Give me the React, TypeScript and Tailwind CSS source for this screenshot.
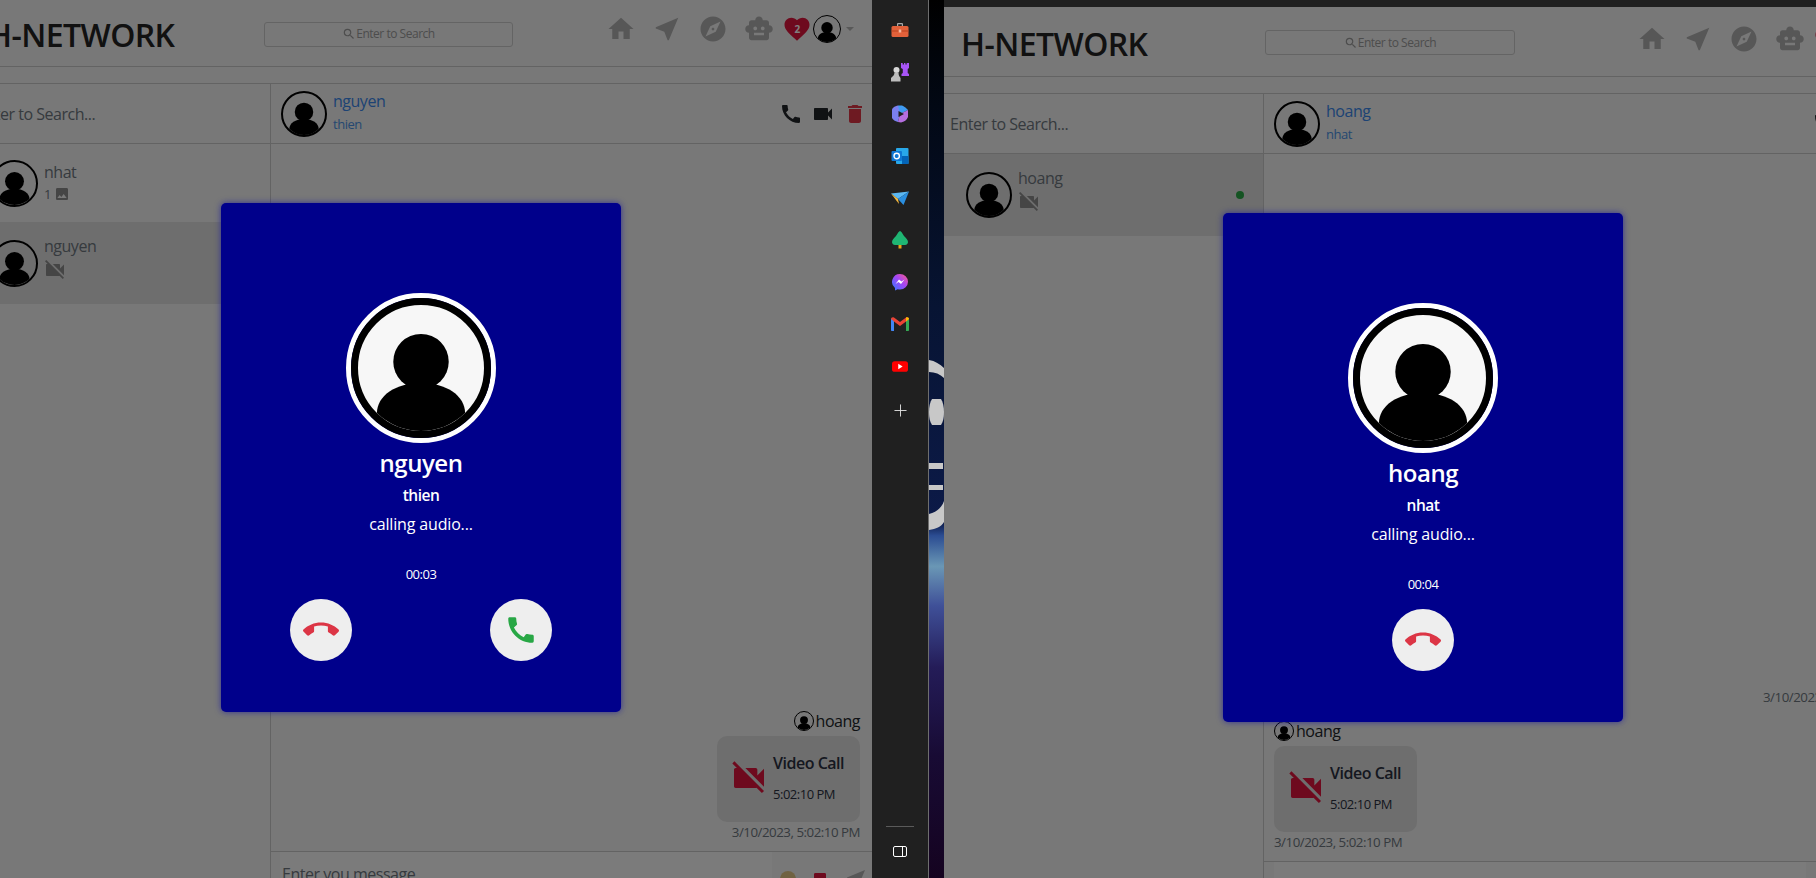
import React from 'react';
import { MdCall, MdCallEnd, MdDelete, MdExplore, MdFavorite, MdHome, MdImage, MdNearMe, MdSearch, MdSmartToy, MdVideocam, MdVideocamOff } from 'react-icons/md';

// person silhouette used by every avatar
const Person: React.FC = () => (
  <svg viewBox="0 0 100 100" className="block w-full h-full">
    <circle cx="50" cy="45" r="22" fill="#000" />
    <path d="M15 100 V86 C15 72 30 62 50 62 C70 62 85 72 85 86 V100 Z" fill="#000" />
  </svg>
);

const Avatar: React.FC<{ className: string }> = ({ className }) => (
  <div className={`shrink-0 rounded-full border-black overflow-hidden ${className}`}>
    <Person />
  </div>
);

const NavIcons: React.FC = () => (
  <div className="flex gap-4 text-[#aeaeae] text-[30px]">
    <MdHome />
    <MdNearMe />
    <MdExplore />
    <MdSmartToy />
  </div>
);

const Heart: React.FC = () => (
  <div className="relative text-[30px] text-[#dc143c] ml-2 shrink-0">
    <MdFavorite />
    <span className="absolute inset-0 flex items-center justify-center text-[10px] font-bold text-white">2</span>
  </div>
);

const Title: React.FC<{ className: string }> = ({ className }) => (
  <div className={`shrink-0 text-[32px] leading-none font-semibold tracking-[-0.018em] text-[#222] whitespace-nowrap ${className}`}>H-NETWORK</div>
);

const TopSearch: React.FC<{ className: string }> = ({ className }) => (
  <div className={`shrink-0 h-[25px] mt-[2px] rounded-[3px] border border-[#c8c8c8] flex items-center justify-center text-[12px] text-[#9a9a9a] ${className}`}>
    <MdSearch className="text-[14px]" />
    Enter to Search
  </div>
);

const CallActions: React.FC = () => (
  <div className="flex gap-[8px] text-[24px]">
    <MdCall className="text-[#212529]" />
    <MdVideocam className="text-[#212529]" />
    <MdDelete className="text-[#dc3545]" />
  </div>
);

const ChatHead: React.FC<{ name: string; sub: string }> = ({ name, sub }) => (
  <div className="ml-[6px] flex flex-col -mt-[4px]">
    <span className="text-[16px] leading-[24px] text-[#3a86e8]">{name}</span>
    <span className="text-[13px] leading-[22px] text-[#4a90e2]">{sub}</span>
  </div>
);

const VideoBubble: React.FC = () => (
  <div className="flex h-[86px] w-[143px] rounded-[10px] bg-[#dcdcdc] pl-[14px] pt-[16px] mt-[5px]">
    <MdVideocamOff className="text-[#dc143c] text-[40px] mt-[6px] -ml-[2px] shrink-0" />
    <div className="ml-[4px] flex flex-col">
      <span className="text-[16px] leading-[22px] font-semibold text-[#2b3040] whitespace-nowrap">Video Call</span>
      <span className="text-[13px] leading-[20px] mt-[10px] text-[#2b3040] whitespace-nowrap">5:02:10 PM</span>
    </div>
  </div>
);

const Author: React.FC = () => (
  <div className="flex items-center h-[20px] text-[16px] text-[#212529]">
    <Avatar className="w-[20px] h-[20px] border" />
    <span className="ml-[2px]">hoang</span>
  </div>
);

const MessageDate: React.FC<{ className?: string }> = ({ className = '' }) => (
  <div className={`text-[13.3px] leading-[18px] text-[#6c757d] whitespace-nowrap mt-[1px] ${className}`}>3/10/2023, 5:02:10 PM</div>
);

const RoundButton: React.FC<{ children: React.ReactNode }> = ({ children }) => (
  <div className="w-[62px] h-[62px] rounded-full bg-[#eeeeee] flex items-center justify-center">{children}</div>
);

const CallModal: React.FC<{ name: string; sub: string; time: string; className: string; incoming?: boolean }> = ({ name, sub, time, className, incoming }) => (
  <div className={`absolute w-[400px] h-[509px] rounded-[5px] bg-[#00008b] shadow-[0_0_6px_rgba(20,20,160,0.7)] flex flex-col items-center pt-[90px] text-white ${className}`}>
    <div className="w-[150px] h-[150px] rounded-full border-[5px] border-white">
      <div className="w-full h-full rounded-full border-[7px] border-black bg-[#f7f7f7] overflow-hidden">
        <Person />
      </div>
    </div>
    <div className="mt-[4px] text-[24px] leading-[32px] font-semibold">{name}</div>
    <div className="mt-[4px] text-[15.5px] leading-[24px] font-semibold">{sub}</div>
    <div className="mt-[5px] text-[16px] tracking-[-0.01em] leading-[24px]">calling audio...</div>
    <div className="mt-[28px] text-[13px] leading-[20px]">{time}</div>
    <div className={`mt-[15px] flex w-[262px] ${incoming ? 'justify-between' : 'justify-center'}`}>
      <RoundButton>
        <MdCallEnd className="text-[36px] text-[#dc3545]" />
      </RoundButton>
      {incoming && (
        <RoundButton>
          <MdCall className="text-[34px] text-[#28a745]" />
        </RoundButton>
      )}
    </div>
  </div>
);

const LeftWindow: React.FC = () => (
  <div className="relative w-[872px] shrink-0 h-full overflow-hidden bg-[#f0f0f0] flex flex-col">
    <header className="h-[67px] shrink-0 border-b border-[#c6c6c6] flex items-center">
      <Title className="-ml-[12px] w-[276px] mt-[4px]" />
      <TopSearch className="w-[249px]" />
      <div className="ml-[93px] flex items-center mb-[8px]">
        <NavIcons />
        <Heart />
        <Avatar className="w-[28px] h-[28px] border-[1.5px] ml-[1px]" />
        <span className="ml-[5px] w-0 h-0 border-x-[4px] border-x-transparent border-t-[4px] border-t-[#b0b0b0]" />
      </div>
    </header>
    <div className="h-[16px] shrink-0" />
    <div className="flex-1 min-h-0 flex border-t border-[#c6c6c6]">
      <aside className="w-[271px] shrink-0 border-r border-[#c6c6c6] flex flex-col">
        <div className="h-[60px] shrink-0 border-b border-[#c6c6c6] flex items-center text-[16px] text-[#6c757d] -ml-[23px]">Enter to Search...</div>
        <div className="h-[78px] flex items-center">
          <Avatar className="w-[47px] h-[47px] border-2 -ml-[9px]" />
          <div className="ml-[6px] -mt-[2px] flex flex-col text-[#6c757d]">
            <span className="text-[16px] leading-[24px]">nhat</span>
            <span className="flex items-center text-[13px] leading-[20px]">1 <MdImage className="ml-[3px] text-[16px] text-[#8a8a8a]" /></span>
          </div>
        </div>
        <div className="h-[82px] bg-[#dcdcdc] flex items-center">
          <Avatar className="w-[47px] h-[47px] border-2 -ml-[9px]" />
          <div className="ml-[6px] -mt-[10px] flex flex-col text-[#6c757d]">
            <span className="text-[16px] leading-[24px]">nguyen</span>
            <MdVideocamOff className="text-[24px] text-[#8a8a8a] -ml-[1px]" />
          </div>
        </div>
      </aside>
      <main className="flex-1 min-w-0 flex flex-col">
        <div className="h-[60px] shrink-0 border-b border-[#c6c6c6] flex items-center pl-[10px] pr-[5px]">
          <Avatar className="w-[46px] h-[46px] border-2" />
          <ChatHead name="nguyen" sub="thien" />
          <div className="ml-auto"><CallActions /></div>
        </div>
        <div className="flex-1 min-h-0 flex flex-col items-end justify-end pr-[12px] pb-[10px]">
          <Author />
          <VideoBubble />
          <MessageDate />
        </div>
        <div className="h-[27px] shrink-0 border-t border-[#c6c6c6] flex pl-[9px] overflow-hidden">
          <div className="w-[492px] bg-[#f6f6f6] pt-[10px] pl-[2px] text-[16px] text-[#6c757d]">Enter you message</div>
          <div className="flex items-start pl-[8px] pt-[19px] gap-[16px]">
            <span className="w-[16px] h-[16px] rounded-full bg-[#e0c585]" />
            <MdImage className="text-[16px] text-[#dc143c]" />
            <MdNearMe className="text-[24px] -mt-[4px] text-[#aeaeae]" />
          </div>
        </div>
      </main>
    </div>
    <div className="absolute inset-0 bg-black/50" />
    <CallModal name="nguyen" sub="thien" time="00:03" incoming className="left-[221px] top-[203px]" />
  </div>
);

const RightWindow: React.FC = () => (
  <div className="relative flex-1 min-w-0 h-full overflow-hidden bg-[#f0f0f0] flex flex-col">
    <header className="h-[70px] shrink-0 border-b border-[#c6c6c6] flex items-center">
      <Title className="ml-[17px] w-[304px] mt-[4px]" />
      <TopSearch className="w-[250px]" />
      <div className="ml-[122px] flex items-center mb-[6px]">
        <NavIcons />
        <Heart />
      </div>
    </header>
    <div className="h-[16px] shrink-0" />
    <div className="flex-1 min-h-0 flex border-t border-[#c6c6c6]">
      <aside className="w-[320px] shrink-0 border-r border-[#c6c6c6] flex flex-col">
        <div className="h-[60px] shrink-0 border-b border-[#c6c6c6] flex items-center pl-[6px] text-[16px] text-[#6c757d]">Enter to Search...</div>
        <div className="h-[82px] bg-[#dcdcdc] flex items-center pl-[22px] pr-[19px]">
          <Avatar className="w-[46px] h-[46px] border-2" />
          <div className="ml-[6px] -mt-[10px] flex flex-col text-[#6c757d]">
            <span className="text-[16px] leading-[24px]">hoang</span>
            <MdVideocamOff className="text-[24px] text-[#8a8a8a] -ml-[1px]" />
          </div>
          <span className="ml-auto w-[8px] h-[8px] rounded-full bg-[#28a745]" />
        </div>
      </aside>
      <main className="flex-1 min-w-0 flex flex-col">
        <div className="h-[60px] shrink-0 border-b border-[#c6c6c6] flex items-center pl-[10px]">
          <Avatar className="w-[46px] h-[46px] border-2" />
          <ChatHead name="hoang" sub="nhat" />
          <div className="ml-auto -mr-[84px]"><CallActions /></div>
        </div>
        <div className="flex-1 min-h-0 flex flex-col items-start justify-end pl-[10px] pb-[10px]">
          <MessageDate className="ml-[489px] mb-[15px]" />
          <Author />
          <VideoBubble />
          <MessageDate />
        </div>
        <div className="h-[17px] shrink-0 border-t border-[#c6c6c6] pl-[10px] pr-[10px]">
          <div className="h-full bg-[#f6f6f6]" />
        </div>
      </main>
    </div>
    <div className="absolute inset-0 bg-black/50" />
    <CallModal name="hoang" sub="nhat" time="00:04" className="left-[279px] top-[206px]" />
  </div>
);

// Sidebar app logos, drawn by hand
const ToolboxLogo = () => (
  <svg viewBox="0 0 18 18" className="w-[18px] h-[18px]">
    <path d="M6 5V3.2C6 2.5 6.5 2 7.2 2h3.6c.7 0 1.2.5 1.2 1.2V5h-1.2V3.2H7.2V5z" fill="#a8a8a8" />
    <rect x="0.5" y="5" width="17" height="11" rx="1.5" fill="#e2613a" />
    <rect x="0.5" y="9.5" width="17" height="1" fill="#b8431f" />
    <rect x="7.7" y="8.5" width="2.6" height="3" rx="0.5" fill="#f4b8a0" />
  </svg>
);
const ChessLogo = () => (
  <svg viewBox="0 0 20 20" className="w-[20px] h-[20px]">
    <circle cx="6.5" cy="8" r="3" fill="#d8d8d8" />
    <path d="M4.500 10.500h4c0 2.500.8 4 2 5.500v3.500H1V16c1.700-1.500 3.500-3 3.500-5.500z" fill="#bdbdbd" />
    <path d="M11 1h1.700v1.600h1.300V1h1.400v1.600h1.300V1H19v5l-1.300 1v4l1.300 1v2h-7.500v-2l1.300-1V7L11 6z" fill="#a855f7" />
  </svg>
);
const CopilotLogo = () => (
  <svg viewBox="0 0 16 18" className="w-[16px] h-[18px]">
    <path d="M6 0.500 L10 0.500 C12 1 14 3 16 5 L8 9 L6 5z" fill="#3f9bf2" />
    <path d="M0 5 C0 3 3 1 6 0.500 L8 9 L6 17 C3 16 1 15 0 13z" fill="#7b7ff0" />
    <path d="M8 9 L16 5 V12 C15 15 12 17 9 17.500 L6 17z" fill="#b56fe0" />
    <path d="M6.500 6 L12 9 L6.500 12z" fill="#202020" />
  </svg>
);
const OutlookLogo = () => (
  <svg viewBox="0 0 18 18" className="w-[18px] h-[18px]">
    <rect x="5" y="1" width="12.500" height="16" rx="1" fill="#28a8ea" />
    <rect x="11" y="9" width="6.500" height="8" fill="#0364b8" />
    <rect x="0.500" y="4" width="10.500" height="10" rx="1" fill="#0f78d4" />
    <circle cx="5.700" cy="9" r="2.700" fill="none" stroke="#fff" strokeWidth="1.400" />
  </svg>
);
const PlaneLogo = () => (
  <svg viewBox="0 0 18 14" className="w-[18px] h-[14px]">
    <path d="M0 2.500 L18 0.500 L7 8z" fill="#5bb8f2" />
    <path d="M0 2.500 L7 8 L8 13z" fill="#f5b83d" />
    <path d="M7 8 L18 0.500 L12.500 14z" fill="#2b8fe0" />
  </svg>
);
const TreeLogo = () => (
  <svg viewBox="0 0 16 18" className="w-[16px] h-[18px]">
    <rect x="6.500" y="13" width="3" height="4.500" fill="#e8a317" />
    <path d="M8 0 C9 0 10.500 2.500 12 5 C14 7 16 9 16 11 C16 12.500 15 14 13 14 H3 C1 14 0 12.500 0 11 C0 9 2 7 4 5 C5.500 2.500 7 0 8 0z" fill="#1fb573" />
  </svg>
);
const MessengerLogo = () => (
  <svg viewBox="0 0 18 18" className="w-[18px] h-[18px]">
    <defs>
      <linearGradient id="msgr" x1="0" y1="1" x2="1" y2="0">
        <stop offset="0" stopColor="#2f7bff" />
        <stop offset="0.55" stopColor="#a445f5" />
        <stop offset="1" stopColor="#ff5c87" />
      </linearGradient>
    </defs>
    <path d="M9 1a8 7.800 0 0 1 0 15.600c-.8 0-1.600-.1-2.300-.3L4 17.500v-2.600A7.800 7.800 0 0 1 9 1z" fill="url(#msgr)" />
    <path d="M4.500 11 L8 6.500 L10.500 8.500 L13.500 6.500 L10 11 L7.500 9z" fill="#fff" />
  </svg>
);
const GmailLogo = () => (
  <svg viewBox="0 0 18 14" className="w-[18px] h-[14px]">
    <path d="M0 2 L3 1 V14 H1 C.4 14 0 13.600 0 13z" fill="#4285f4" />
    <path d="M15 1 L18 2 V13 C18 13.600 17.600 14 17 14 H15z" fill="#34a853" />
    <path d="M0 2 C0 .5 1.600-.4 3 .6 L9 5 L15 .6 C16.400-.4 18 .5 18 2 L15 4.500 L9 9 L3 4.500z" fill="#ea4335" />
    <path d="M15 .6 C16.400-.4 18 .5 18 2 L15 4.500z" fill="#fbbc04" />
  </svg>
);
const YoutubeLogo = () => (
  <svg viewBox="0 0 18 12" className="w-[16px] h-[11px]">
    <rect width="18" height="12" rx="3" fill="#f00" />
    <path d="M7 3 L12 6 L7 9z" fill="#fff" />
  </svg>
);

const edgeLogos = [ToolboxLogo, ChessLogo, CopilotLogo, OutlookLogo, PlaneLogo, TreeLogo, MessengerLogo, GmailLogo, YoutubeLogo];

const EdgeBar: React.FC = () => (
  <div className="w-[57px] shrink-0 h-full bg-[#202020] border-r border-[#6e6e6e] flex flex-col items-center pt-[9px]">
    {edgeLogos.map((Logo, i) => (
      <div key={i} className="h-[42px] w-full flex items-center justify-center shrink-0">
        <Logo />
      </div>
    ))}
    <div className="h-[46px] flex items-center justify-center text-white">
      <svg viewBox="0 0 14 14" className="w-[13px] h-[13px]">
        <path d="M7 0.500V13.500M0.500 7H13.500" stroke="#e0e0e0" strokeWidth="1" />
      </svg>
    </div>
    <div className="mt-auto w-[28px] border-t border-[#5a5a5a] mb-[19px]" />
    <svg viewBox="0 0 14 11" className="w-[14px] h-[11px] mb-[21px]">
      <rect x="0.500" y="0.500" width="13" height="10" rx="1.500" fill="none" stroke="#fff" strokeWidth="1" />
      <path d="M9.500 0.500V10.500" stroke="#fff" strokeWidth="1" />
    </svg>
  </div>
);

const Wallpaper: React.FC = () => (
  <div className="w-[15px] shrink-0 h-full">
    <svg viewBox="0 0 15 878" preserveAspectRatio="none" className="block w-full h-full">
      <defs>
        <linearGradient id="wall" x1="0" y1="0" x2="0" y2="1">
          <stop offset="0" stopColor="#000000" />
          <stop offset="0.12" stopColor="#020814" />
          <stop offset="0.35" stopColor="#071433" />
          <stop offset="0.595" stopColor="#0c1a48" />
          <stop offset="0.61" stopColor="#2b4c92" />
          <stop offset="0.645" stopColor="#6a97b5" />
          <stop offset="0.69" stopColor="#3f5098" />
          <stop offset="0.76" stopColor="#241c58" />
          <stop offset="0.86" stopColor="#180b34" />
          <stop offset="1" stopColor="#150320" />
        </linearGradient>
      </defs>
      <rect width="15" height="878" fill="url(#wall)" />
      <path d="M0 360 C6 361 11 364 15 368 V378 C11 374 6 372 0 372z" fill="#c8c8c8" />
      <path d="M3 399 H12 C14 402 15 407 15 412 C15 418 14 422 12 425 H3 C1 422 0 418 0 412 C0 407 1 402 3 399z" fill="#c8c8c8" />
      <rect y="463" width="14" height="6" fill="#c8c8c8" />
      <rect y="485" width="14" height="5" fill="#c8c8c8" />
      <path d="M15 501 C12 509 7 512 0 514 V530 C7 529 12 527 15 522z" fill="#c8c8c8" />
    </svg>
  </div>
);

export default function App() {
  return (
    <div className="flex w-[1816px] h-[878px] overflow-hidden font-['Open_Sans',sans-serif] tracking-[-0.03em]">
      <LeftWindow />
      <EdgeBar />
      <Wallpaper />
      <div className="flex-1 min-w-0 h-full flex flex-col bg-[#202020] pt-[7px]">
        <RightWindow />
      </div>
    </div>
  );
}
